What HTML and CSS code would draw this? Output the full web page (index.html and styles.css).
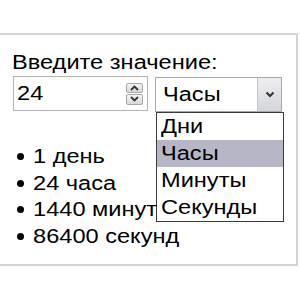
FILE: index.html
```html
<!DOCTYPE html>
<html lang="ru">
<head>
  <meta charset="UTF-8">
  <title>Конвертер</title>
  <link rel="stylesheet" href="styles.css">
</head>
<body>
  <div class="panel">
    <div class="label"><span class="wide">Введите значение:</span></div>
    <div class="controls">
      <div class="number-box">
        <span class="number-value wide">24</span>
        <div class="spinner">
          <div class="spin-half">
            <svg width="9" height="6" viewBox="0 0 9 6"><path d="M1 5 L4.5 1.5 L8 5" fill="none" stroke="#333" stroke-width="1.8"/></svg>
          </div>
          <div class="spin-half">
            <svg width="9" height="6" viewBox="0 0 9 6"><path d="M1 1 L4.5 4.5 L8 1" fill="none" stroke="#333" stroke-width="1.8"/></svg>
          </div>
        </div>
      </div>
      <div class="select-wrap">
        <div class="select-box">
          <span class="select-value"><span class="wide">Часы</span></span>
          <div class="select-button">
            <svg width="10" height="7" viewBox="0 0 10 7"><path d="M1.5 1.5 L5 5 L8.5 1.5" fill="none" stroke="#333" stroke-width="2"/></svg>
          </div>
        </div>
        <!-- open dropdown -->
        <ul class="options">
          <li><span class="wide">Дни</span></li>
          <li class="selected"><span class="wide">Часы</span></li>
          <li><span class="wide">Минуты</span></li>
          <li><span class="wide">Секунды</span></li>
        </ul>
      </div>
    </div>
    <ul class="results">
      <li><span class="wide">1 день</span></li>
      <li><span class="wide">24 часа</span></li>
      <li><span class="wide">1440 минут</span></li>
      <li><span class="wide">86400 секунд</span></li>
    </ul>
  </div>
</body>
</html>
```

FILE: styles.css
```css
body {
  margin: 0;
  padding: 0;
  background-color: #ffffff;
  font-family: "Liberation Sans", Arial, sans-serif;
  color: #000;
  overflow: hidden;
}

/* the screenshot text is a bit wider than plain Arial */
.wide {
  display: inline-block;
  transform: scaleX(1.18);
  transform-origin: left center;
  white-space: nowrap;
}

.panel {
  margin-top: 33px;
  width: 298px;
  height: 233px;
  box-sizing: border-box;
  border-top: 2px solid #d4d4d4;
  border-right: 2px solid #d4d4d4;
  border-bottom: 2px solid #d4d4d4;
  padding: 15px 0 0 12px;
}

.label {
  font-size: 20px;
  line-height: 24px;
}

.controls {
  display: flex;
  gap: 7px;
  margin-top: 2px;
  margin-left: 1px;
}

.number-box {
  width: 135px;
  height: 35px;
  box-sizing: border-box;
  border: 1px solid #b4b4b4;
  display: flex;
  align-items: center;
  justify-content: space-between;
  padding: 0 4px 0 3px;
}

.number-value {
  font-size: 20px;
}

.spinner {
  width: 17px;
  height: 22px;
  display: flex;
  flex-direction: column;
  gap: 1px;
}

.spin-half {
  flex: 1;
  border: 1px solid #a8a8a8;
  border-radius: 2px;
  background: linear-gradient(#f4f4f4, #d8d8d8);
  display: flex;
  align-items: center;
  justify-content: center;
}

.select-wrap {
  position: relative;
  margin-top: 1px;
}

.select-box {
  width: 127px;
  height: 35px;
  box-sizing: border-box;
  border: 1px solid #a8a8a8;
  display: flex;
  align-items: stretch;
}

.select-value {
  flex: 1;
  font-size: 20px;
  line-height: 33px;
  padding-left: 7px;
}

.select-button {
  width: 23px;
  border-left: 1px solid #c4c4c4;
  background: linear-gradient(#eeeef2, #d4d4dc);
  display: flex;
  align-items: center;
  justify-content: center;
}

.options {
  position: absolute;
  top: 35px;
  left: 1px;
  width: 128px;
  box-sizing: border-box;
  margin: 0;
  padding: 0;
  list-style: none;
  background: #fff;
  border: 1px solid #3a3a3a;
  font-size: 20px;
}

.options li {
  height: 27px;
  line-height: 27px;
  padding-left: 4px;
}

.options li.selected {
  background-color: #b6b6c6;
}

.results {
  margin: 31px 0 0 0;
  padding: 0 0 0 21px;
  list-style: none;
  font-size: 20px;
  line-height: 26.5px;
}

.results li {
  position: relative;
}

.results li::before {
  content: "";
  position: absolute;
  left: -16px;
  top: 10px;
  width: 7px;
  height: 7px;
  border-radius: 50%;
  background: #000;
}
```
